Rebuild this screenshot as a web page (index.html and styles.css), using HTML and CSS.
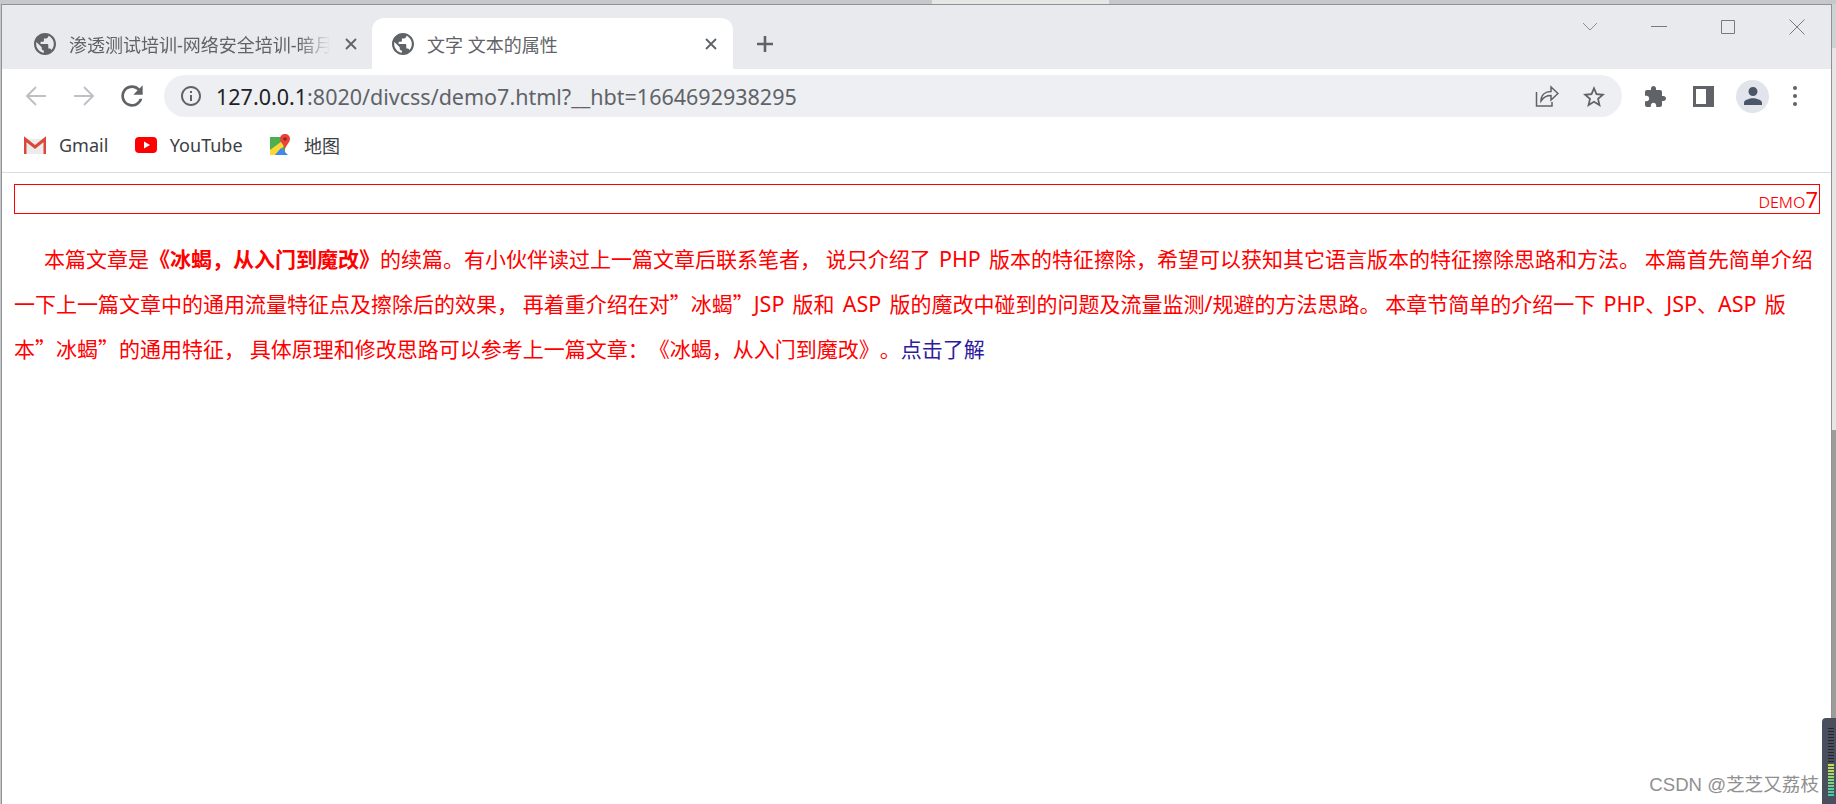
FILE: index.html
```html
<!DOCTYPE html>
<html lang="zh-CN">
<head>
    <meta charset="UTF-8">
    <title>文字 文本的属性</title>
    <link rel="stylesheet" href="styles.css">
</head>
<body>
<svg class="defs" width="0" height="0">
    <symbol id="globe" viewBox="2 2 20 20">
        <path d="M12 2C6.48 2 2 6.48 2 12s4.48 10 10 10 10-4.48 10-10S17.52 2 12 2zm-1 17.93c-3.95-.49-7-3.85-7-7.93 0-.62.08-1.21.21-1.79L9 15v1c0 1.1.9 2 2 2v1.93zm6.9-2.54c-.26-.81-1-1.39-1.9-1.39h-1v-3c0-.55-.45-1-1-1H8v-2h2c.55 0 1-.45 1-1V7h2c1.1 0 2-.9 2-2v-.41c2.93 1.19 5 4.06 5 7.41 0 2.08-.8 3.97-2.1 5.39z"/>
    </symbol>
    <symbol id="cross" viewBox="0 0 12 12">
        <path d="M1 1l10 10M11 1L1 11" fill="none" stroke="currentColor" stroke-width="1.8"/>
    </symbol>
</svg>

<div class="top-strip">
    <div class="strip-dark strip-a"></div>
    <div class="strip-light"></div>
    <div class="strip-dark strip-b"></div>
</div>

<div class="desktop">
    <div class="window">
        <!-- tabs -->
        <div class="tabstrip">
            <div class="tab">
                <svg class="tab-icon"><use href="#globe"/></svg>
                <span class="tab-title fade">渗透测试培训-网络安全培训-暗月教育</span>
                <svg class="tab-close"><use href="#cross"/></svg>
            </div>
            <div class="tab active">
                <svg class="tab-icon"><use href="#globe"/></svg>
                <span class="tab-title">文字 文本的属性</span>
                <svg class="tab-close"><use href="#cross"/></svg>
            </div>
            <svg class="new-tab" viewBox="0 0 18 18"><path d="M9 1v16M1 9h16" fill="none" stroke="#5f6368" stroke-width="2.6"/></svg>
            <div class="win-controls">
                <svg class="win-btn" viewBox="0 0 16 16"><path d="M1 4l7 7 7-7" fill="none" stroke="#8d9096"/></svg>
                <svg class="win-btn" viewBox="0 0 16 16"><path d="M0 7.5h16" fill="none" stroke="#777a80"/></svg>
                <svg class="win-btn" viewBox="0 0 16 16"><path d="M1.5 1.5h13v13h-13z" fill="none" stroke="#777a80"/></svg>
                <svg class="win-btn" viewBox="0 0 16 16"><path d="M.5.5l15 15M15.5.5l-15 15" fill="none" stroke="#777a80"/></svg>
            </div>
        </div>

        <!-- toolbar -->
        <div class="toolbar">
            <div class="nav-btns">
                <svg class="nav-icon" viewBox="0 0 24 24"><path d="M22 12H4M12 3l-9 9 9 9" fill="none" stroke="#bdc1c6" stroke-width="2"/></svg>
                <svg class="nav-icon" viewBox="0 0 24 24"><path d="M2 12h18M12 3l9 9-9 9" fill="none" stroke="#bdc1c6" stroke-width="2"/></svg>
                <svg class="nav-icon" viewBox="3 3 18 18"><path fill="#5f6368" d="M17.65 6.35C16.2 4.9 14.21 4 12 4c-4.42 0-7.99 3.58-7.99 8s3.57 8 7.99 8c3.73 0 6.84-2.55 7.73-6h-2.08c-.82 2.33-3.04 4-5.65 4-3.31 0-6-2.69-6-6s2.69-6 6-6c1.66 0 3.14.69 4.22 1.78L13 11h7V4l-2.35 2.35z"/></svg>
            </div>
            <div class="omnibox">
                <svg class="info-icon" viewBox="2 2 20 20"><path fill="#5f6368" d="M11 7h2v2h-2zm0 4h2v6h-2zm1-9C6.48 2 2 6.48 2 12s4.48 10 10 10 10-4.48 10-10S17.52 2 12 2zm0 18c-4.41 0-8-3.59-8-8s3.59-8 8-8 8 3.59 8 8-3.59 8-8 8z"/></svg>
                <div class="url"><span class="host">127.0.0.1</span>:8020/divcss/demo7.html?__hbt=1664692938295</div>
                <svg class="share-icon" viewBox="0 0 24 22"><path d="M1.5 7v14h15.500v-4M6 16c0-6 4-9.500 10-9.500V2l7 6.500-7 6.500v-4.500c-4.500 0-7.500 1.500-10 5.500z" fill="none" stroke="#5f6368" stroke-width="1.500"/></svg>
                <svg class="star-icon" viewBox="2 2 20 19"><path fill="#5f6368" d="M22 9.24l-7.19-.62L12 2 9.19 8.63 2 9.24l5.46 4.73L5.82 21 12 17.27 18.18 21l-1.63-7.03L22 9.24zM12 15.4l-3.76 2.27 1-4.28-3.32-2.88 4.38-.38L12 6.1l1.71 4.04 4.38.38-3.32 2.88 1 4.28L12 15.4z"/></svg>
            </div>
            <div class="tool-btns">
                <svg class="puzzle" viewBox="2 1 21 21"><path fill="#5f6368" d="M20.5 11H19V7c0-1.100-.9-2-2-2h-4V3.500C13 2.120 11.880 1 10.500 1S8 2.120 8 3.500V5H4c-1.100 0-1.990.9-1.990 2v3.800H3.500c1.490 0 2.700 1.210 2.700 2.700s-1.210 2.700-2.700 2.700H2V20c0 1.100.9 2 2 2h3.800v-1.500c0-1.490 1.210-2.700 2.700-2.700 1.490 0 2.700 1.210 2.700 2.700V22H17c1.100 0 2-.9 2-2v-4h1.500c1.380 0 2.500-1.120 2.500-2.500S21.880 11 20.500 11z"/></svg>
                <div class="side-panel"></div>
                <div class="avatar">
                    <svg class="avatar-icon" viewBox="4 4 16 16"><path fill="#4a5568" d="M12 12c2.210 0 4-1.790 4-4s-1.790-4-4-4-4 1.790-4 4 1.790 4 4 4zm0 2c-2.670 0-8 1.340-8 4v2h16v-2c0-2.660-5.330-4-8-4z"/></svg>
                </div>
                <div class="menu-dots"><i></i><i></i><i></i></div>
            </div>
        </div>

        <!-- bookmarks -->
        <div class="bookmarks">
            <div class="bookmark">
                <svg class="bm-icon" viewBox="0 0 22 18">
                    <path d="M1 3h20v15H1z" fill="#ececec"/>
                    <path d="M1 18V3l10 8 10-8v15" fill="none" stroke="#d9483b" stroke-width="3"/>
                </svg>
                <span>Gmail</span>
            </div>
            <div class="bookmark">
                <svg class="bm-icon" viewBox="0 0 22 18">
                    <rect x="0" y="1" width="22" height="16" rx="4" fill="#f00"/>
                    <path d="M9 5.500v7l6-3.500z" fill="#fff"/>
                </svg>
                <span>YouTube</span>
            </div>
            <div class="bookmark">
                <svg class="bm-icon map-icon" viewBox="0 0 22 22">
                    <path d="M1 3h15v18H1z" fill="#4caf50"/>
                    <path d="M1 16L16 5v6L6 21H1z" fill="#fdd835"/>
                    <path d="M6 21l6-7 7 7z" fill="#4285f4"/>
                    <path d="M16 0c3 0 5 2 5 5 0 3-3 5-5 10-1.500-5-5-7-5-10 0-3 2-5 5-5z" fill="#ea4335"/>
                    <circle cx="16" cy="5" r="1.800" fill="#8e2a20"/>
                </svg>
                <span>地图</span>
            </div>
        </div>

        <!-- page -->
        <div class="page">
            <div class="demo-box"><span class="demo-word">demo</span>7</div>
            <p class="article">本篇文章是<b>《冰蝎，从入门到魔改》</b>的续篇。有小伙伴读过上一篇文章后联系笔者， 说只介绍了<span class="latin"> PHP </span>版本的特征擦除，希望可以获知其它语言版本的特征擦除思路和方法。 本篇首先简单介绍一下上一篇文章中的通用流量特征点及擦除后的效果， 再着重介绍在对”冰蝎”<span class="latin">JSP </span>版和<span class="latin"> ASP </span>版的魔改中碰到的问题及流量监测<span class="latin">/</span>规避的方法思路。 本章节简单的介绍一下<span class="latin"> PHP</span>、<span class="latin">JSP</span>、<span class="latin">ASP </span>版本”冰蝎”的通用特征， 具体原理和修改思路可以参考上一篇文章：《冰蝎，从入门到魔改》。<a href="#">点击了解</a></p>
        </div>
    </div>
    <div class="side-strip"></div>
</div>

<div class="watermark">CSDN @芝芝又荔枝</div>
<div class="meter">
    <div class="meter-off"></div>
    <div class="meter-on"></div>
</div>
</body>
</html>
```

FILE: styles.css
```css
* {
    margin: 0;
    padding: 0;
    box-sizing: border-box;
}

html, body {
    height: 100%;
    overflow: hidden;
}

body {
    position: relative;
    display: flex;
    flex-direction: column;
    background: #fff;
    font-family: "Noto Sans", "Noto Sans CJK SC", sans-serif;
}

.defs {
    position: absolute;
}

/* desktop behind the window */
.top-strip {
    display: flex;
    height: 4px;
    flex: none;
}

.strip-dark {
    background: #c6c9cc;
}

.strip-a {
    width: 932px;
}

.strip-light {
    width: 177px;
    background: #e6e6e4;
}

.strip-b {
    flex: 1;
}

.desktop {
    flex: 1;
    display: flex;
    min-height: 0;
    padding-left: 1px;
    background: #c6c9cc;
}

.window {
    flex: 1;
    display: flex;
    flex-direction: column;
    border: 1px solid #8f9194;
    border-bottom: 0;
    background: #fff;
}

.side-strip {
    width: 4px;
    background: linear-gradient(to bottom, #cfd1d3 0, #cfd1d3 44px, #e6e6e6 44px, #e6e6e6 426px, #9c9c9c 426px);
}

/* tabs */
.tabstrip {
    height: 64px;
    flex: none;
    display: flex;
    align-items: flex-end;
    padding-left: 15px;
    background: #e8eaed;
}

.tab {
    width: 355px;
    height: 51px;
    display: flex;
    align-items: center;
    padding: 0 15px 0 17px;
    color: #5f6368;
    font-size: 18px;
}

.tab.active {
    width: 361px;
    padding: 0 16px 0 20px;
    background: #fff;
    border-radius: 12px 12px 0 0;
}

.tab-icon {
    width: 22px;
    height: 22px;
    flex: none;
    fill: #5f6368;
}

.tab-title {
    flex: 1;
    margin-left: 13px;
    overflow: hidden;
    white-space: nowrap;
}

.tab-title.fade {
    -webkit-mask-image: linear-gradient(to right, #000 88%, transparent 100%);
    mask-image: linear-gradient(to right, #000 88%, transparent 100%);
}

.tab-close {
    width: 12px;
    height: 12px;
    flex: none;
    margin-left: 15px;
    color: #5f6368;
}

.new-tab {
    width: 18px;
    height: 18px;
    margin: 0 0 16px 23px;
}

.win-controls {
    margin-left: auto;
    align-self: flex-start;
    display: flex;
    gap: 53px;
    padding: 14px 26px 0 0;
}

.win-btn {
    width: 16px;
    height: 16px;
}

/* toolbar */
.toolbar {
    height: 54px;
    flex: none;
    display: flex;
    align-items: center;
    padding: 0 0 0 22px;
}

.nav-btns {
    display: flex;
    align-items: center;
    gap: 24px;
    width: 140px;
}

.nav-icon {
    width: 24px;
    height: 24px;
}

.omnibox {
    width: 1458px;
    height: 42px;
    display: flex;
    align-items: center;
    padding: 0 17px 0 17px;
    background: #edeff2;
    border-radius: 21px;
}

.info-icon {
    width: 20px;
    height: 20px;
    flex: none;
}

.url {
    flex: 1;
    margin-left: 15px;
    color: #5f6368;
    font-size: 21.5px;
    white-space: nowrap;
}

.host {
    color: #202124;
}

.share-icon {
    width: 24px;
    height: 22px;
    flex: none;
}

.star-icon {
    width: 22px;
    height: 21px;
    margin-left: 24px;
    flex: none;
}

.tool-btns {
    flex: 1;
    display: flex;
    align-items: center;
    padding-left: 23px;
}

.puzzle {
    width: 21px;
    height: 21px;
}

.side-panel {
    width: 21px;
    height: 21px;
    margin-left: 27px;
    border: solid #5f6368;
    border-width: 3px 8px 3px 3px;
}

.avatar {
    width: 33px;
    height: 33px;
    margin-left: 22px;
    display: flex;
    align-items: center;
    justify-content: center;
    border-radius: 50%;
    background: #e1e4ea;
}

.avatar-icon {
    width: 18px;
    height: 18px;
}

.menu-dots {
    margin-left: 24px;
    display: flex;
    flex-direction: column;
    gap: 4px;
}

.menu-dots i {
    width: 4px;
    height: 4px;
    border-radius: 50%;
    background: #5f6368;
}

/* bookmarks */
.bookmarks {
    height: 50px;
    flex: none;
    display: flex;
    align-items: center;
    gap: 26.5px;
    padding: 0 0 5px 22px;
    border-bottom: 1px solid #dadce0;
}

.bookmark {
    display: flex;
    align-items: center;
    gap: 13px;
    color: #3c4043;
    font-size: 18px;
}

.bm-icon {
    width: 22px;
    height: 18px;
}

.map-icon {
    height: 22px;
}

/* page content */
.page {
    flex: 1;
    padding: 11px 11px 0 12px;
    color: #f00;
    font-family: "Noto Sans CJK SC", sans-serif;
    font-size: 21px;
}

.demo-box {
    height: 30px;
    padding-right: 1px;
    border: 1px solid #f00;
    font-family: "Noto Sans", sans-serif;
    font-size: 22px;
    line-height: 29px;
    text-align: right;
}

.demo-word {
    font-size: 20px;
    font-weight: 300;
    font-variant: small-caps;
}

.article {
    margin-top: 22px;
    line-height: 45px;
    text-indent: 30px;
    text-spacing-trim: space-all;
}

.latin {
    font-family: "Noto Sans", sans-serif;
    font-size: 21.5px;
    line-height: 1;
    word-spacing: 2.6px;
}

.article a {
    color: #2e1a9c;
    text-decoration: none;
}

/* overlays */
.watermark {
    position: absolute;
    right: 17px;
    bottom: 8px;
    color: #909090;
    font-family: "Liberation Sans", "Noto Sans CJK SC", sans-serif;
    font-size: 18.6px;
    white-space: nowrap;
}

.meter {
    position: absolute;
    right: 0;
    bottom: 0;
    width: 14px;
    height: 86px;
    padding: 10px 2px 7px 6px;
    display: flex;
    flex-direction: column;
    background: #4a4f5e;
    border-radius: 4px 0 0 0;
}

.meter-off {
    height: 36px;
    background: repeating-linear-gradient(to bottom, #23262e 0, #23262e 1px, #4a4f5e 1px, #4a4f5e 3px);
}

.meter-on {
    flex: 1;
    background:
        repeating-linear-gradient(to bottom, transparent 0, transparent 2px, #4a4f5e 2px, #4a4f5e 3px),
        linear-gradient(to bottom, #d2dc52, #84d57a 50%, #3fc5b0);
}
```
